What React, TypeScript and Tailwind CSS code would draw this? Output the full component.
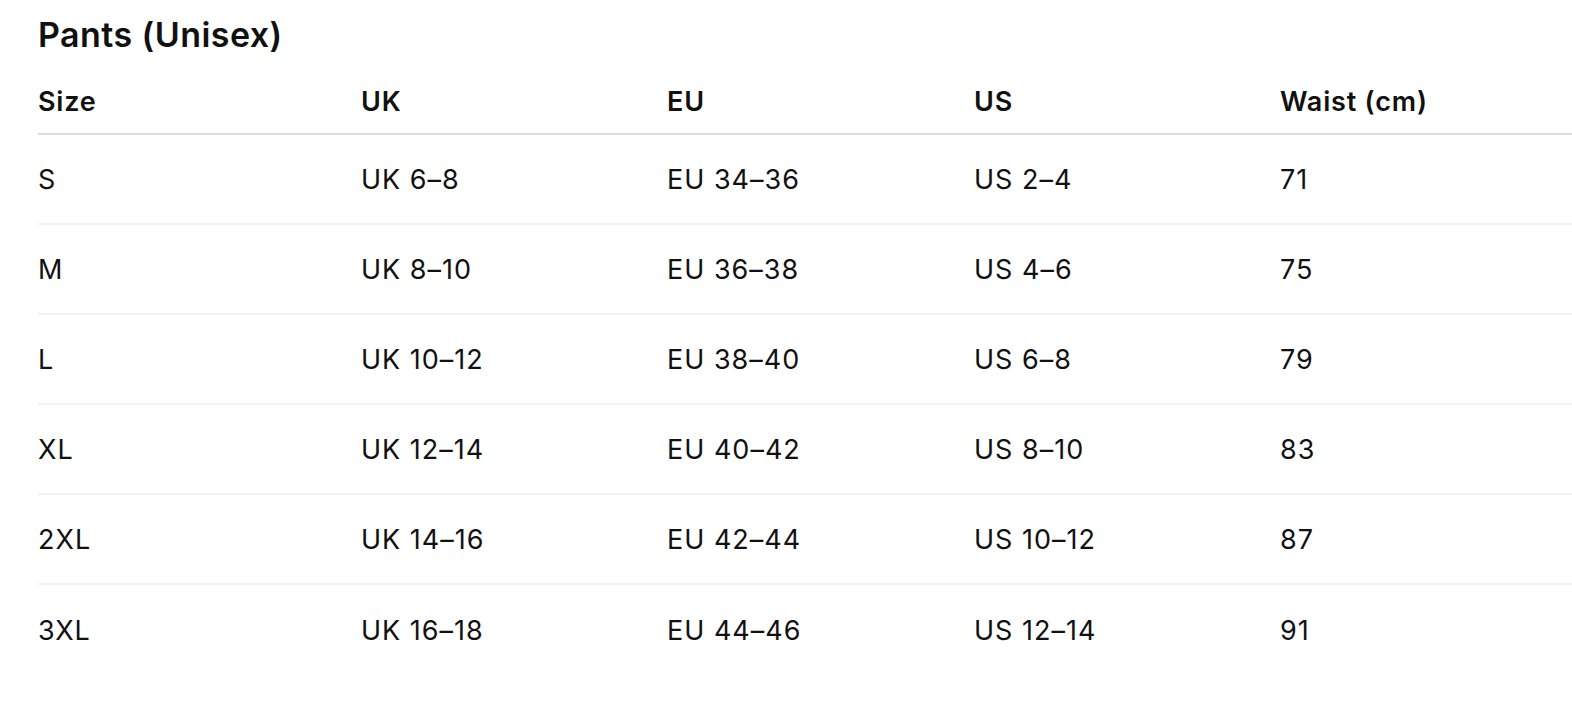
import React from "react";

const rows = [
  ["S", "UK 6–8", "EU 34–36", "US 2–4", "71"],
  ["M", "UK 8–10", "EU 36–38", "US 4–6", "75"],
  ["L", "UK 10–12", "EU 38–40", "US 6–8", "79"],
  ["XL", "UK 12–14", "EU 40–42", "US 8–10", "83"],
  ["2XL", "UK 14–16", "EU 42–44", "US 10–12", "87"],
  ["3XL", "UK 16–18", "EU 44–46", "US 12–14", "91"],
];

const headers = ["Size", "UK", "EU", "US", "Waist (cm)"];
const widths = ["w-[323px]", "w-[306px]", "w-[307px]", "w-[306px]", "flex-1"];

export default function App() {
  return (
    <div
      className="min-h-[716px] bg-white pl-[38px] pt-[15px] text-[#111111]"
      style={{ fontFamily: "Inter, 'Noto Sans', sans-serif" }}
    >
      <h1 className="text-[34px] leading-[40px] font-semibold tracking-[0.45px]">Pants (Unisex)</h1>
      <div className="w-full">
        <div className="flex border-b-2 border-[#dcdcdc] pt-[31px] pb-[15px]">
          {headers.map((h, i) => (
            <div key={h} className={`${widths[i]} shrink-0 text-[27px] leading-[32px] font-semibold tracking-[0.8px]`}>
              {h}
            </div>
          ))}
        </div>
        {rows.map((r, ri) => (
          <div
            key={r[0]}
            className={`flex h-[90px] items-center pt-[1px] ${ri < rows.length - 1 ? "border-b-2 border-[#f2f2f2]" : ""}`}
          >
            {r.map((c, i) => (
              <div key={i} className={`${widths[i]} shrink-0 text-[27px] leading-[32px] font-normal tracking-[1px]`}>
                {c}
              </div>
            ))}
          </div>
        ))}
      </div>
    </div>
  );
}
